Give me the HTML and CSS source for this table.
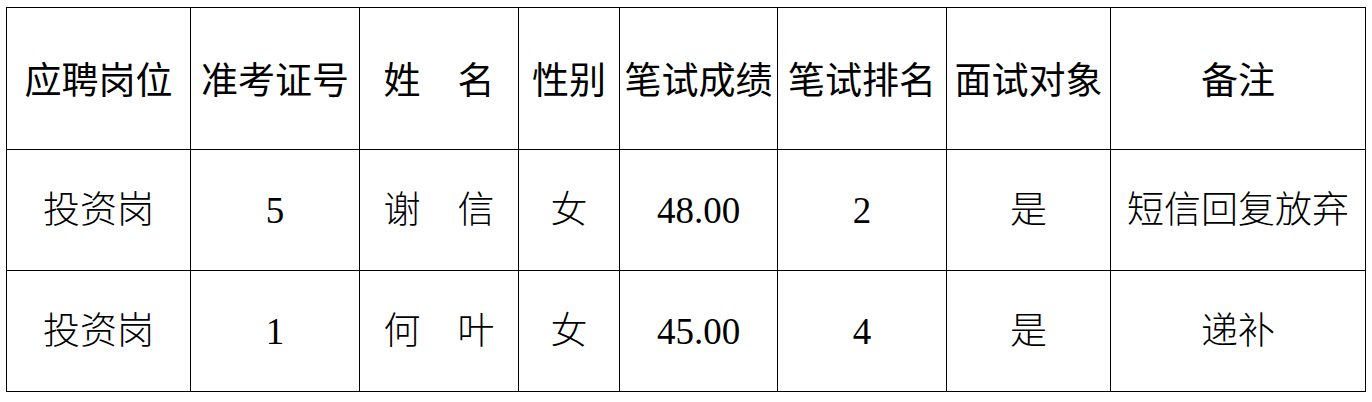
FILE: index.html
```html
<!DOCTYPE html>
<html lang="zh-CN">
<head>
<meta charset="utf-8">
<title>面试对象</title>
<link rel="stylesheet" href="styles.css">
</head>
<body>
<table class="grid">
  <colgroup>
    <col class="c1"><col class="c2"><col class="c3"><col class="c4">
    <col class="c5"><col class="c6"><col class="c7"><col class="c8">
  </colgroup>
  <thead>
    <tr class="head">
      <th>应聘岗位</th><th>准考证号</th><th>姓　名</th><th>性别</th>
      <th>笔试成绩</th><th>笔试排名</th><th>面试对象</th><th>备注</th>
    </tr>
  </thead>
  <tbody>
    <tr class="row">
      <td>投资岗</td><td>5</td><td>谢　信</td><td>女</td>
      <td>48.00</td><td>2</td><td>是</td><td>短信回复放弃</td>
    </tr>
    <tr class="row">
      <td>投资岗</td><td>1</td><td>何　叶</td><td>女</td>
      <td>45.00</td><td>4</td><td>是</td><td>递补</td>
    </tr>
  </tbody>
</table>
</body>
</html>
```
FILE: styles.css
```css
html, body {
  margin: 0;
  padding: 0;
  background: #ffffff;
}
.grid {
  border-collapse: collapse;
  table-layout: fixed;
  width: 1359px;
  margin: 7px 0 0 6px;
  color: #000;
}
.c1 { width: 184px; }
.c2 { width: 169px; }
.c3 { width: 159px; }
.c4 { width: 101px; }
.c5 { width: 158px; }
.c6 { width: 169px; }
.c7 { width: 164px; }
.c8 { width: 255px; }
.grid th, .grid td {
  border: 1px solid #000;
  padding: 0;
  text-align: center;
  vertical-align: middle;
  white-space: nowrap;
  font-size: 37px;
  line-height: 1;
}
.head { height: 142px; }
.head th {
  font-family: "Noto Sans CJK SC", sans-serif;
  font-weight: 400;
}
.row { height: 121px; }
.row td {
  font-family: "Liberation Serif", "Noto Sans CJK SC", serif;
  font-weight: 300;
}
```
